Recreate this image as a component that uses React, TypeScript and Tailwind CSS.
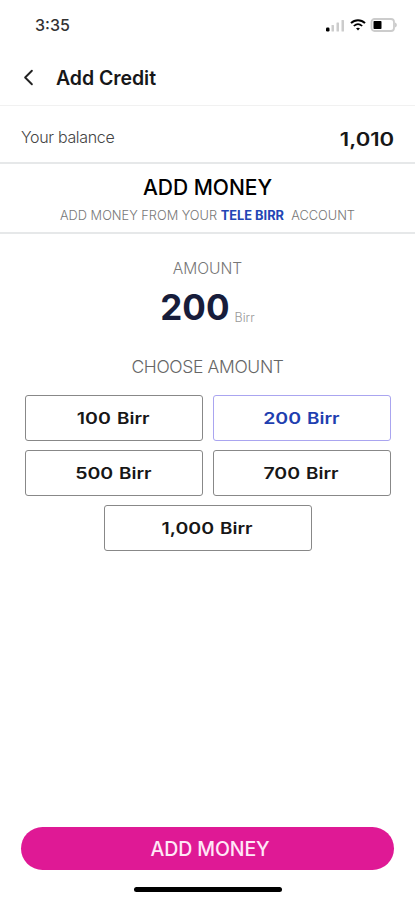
import { ChevronLeft } from "lucide-react";
import { clsx } from "clsx";
import { useState } from "react";

const AMOUNTS = [100, 200, 500, 700, 1000];

const formatAmount = (amount: number) => new Intl.NumberFormat("en-US").format(amount);

const StatusBar = () => (
  <div className="flex h-[50px] items-center justify-between pr-[17px] pl-[35px]">
    <span className="text-[16px] leading-5 font-medium text-[#333]">3:35</span>
    <div className="flex items-center gap-[4px]">
      <svg width="20" height="14" viewBox="0 0 20 14">
        <rect x="0" y="9.5" width="3.5" height="4" rx="1.2" fill="#000" />
        <rect x="5.5" y="7" width="2.5" height="6.5" rx=".5" fill="#ccc" />
        <rect x="10.5" y="4.5" width="2.5" height="9" rx=".5" fill="#ccc" />
        <rect x="15.5" y="2" width="2.5" height="11.5" rx=".5" fill="#ccc" />
      </svg>
      <svg width="16" height="12" viewBox="0 0 16 12" fill="none" stroke="#000">
        <path d="M1 4.1C5 .2 11 .2 15 4.1" strokeWidth="2" />
        <path d="M3.8 7C6.4 4.6 9.6 4.6 12.2 7" strokeWidth="1.7" />
        <path d="M6 9.3C7.2 8.4 8.8 8.4 10 9.3L8 11.6Z" fill="#000" stroke="none" />
      </svg>
      <svg width="28" height="14" viewBox="0 0 28 14">
        <rect x="1.5" y="1" width="22.5" height="12" rx="3" fill="none" stroke="#ccc" strokeWidth="1.8" />
        <rect x="3.5" y="3" width="8" height="8" rx=".8" fill="#000" />
        <path d="M25 4.5V9.5C27.5 8.5 27.5 5.5 25 4.5Z" fill="#ccc" />
      </svg>
    </div>
  </div>
);

type AmountButtonProps = {
  amount: number;
  selected: boolean;
  onSelect: (amount: number) => void;
};

const AmountButton = ({ amount, selected, onSelect }: AmountButtonProps) => (
  <button
    type="button"
    onClick={() => onSelect(amount)}
    className={clsx(
      "flex h-[46px] items-center justify-center gap-[6px] rounded-[3px] border pb-px text-[16px] font-semibold",
      amount === 1000 ? "w-[208px] pl-1" : "w-[178px] pl-px",
      selected ? "border-[#aaa5f0] text-[#1f3fb0]" : "border-[#888] text-[#171717]",
    )}
  >
    <span className="origin-right scale-x-[1.22]">{formatAmount(amount)}</span>
    <span className="origin-left scale-x-[1.18]">Birr</span>
  </button>
);

export default function App() {
  const [selected, setSelected] = useState(200);

  return (
    <div className="flex h-[900px] w-[415px] flex-col bg-white font-['Inter',sans-serif]">
      <StatusBar />
      <header className="flex h-14 items-center border-b border-[#f1f1f1] pl-[15px]">
        <ChevronLeft size={27} strokeWidth={1.7} className="text-[#222]" />
        <h1 className="ml-[14px] pt-0.5 text-[19.5px] font-semibold tracking-[-0.05px] text-[#171719]">Add Credit</h1>
      </header>

      <section className="flex h-[58px] items-center justify-between border-b-2 border-[#e6e8e9] px-[21px] pt-1.5">
        <span className="text-[16px] font-light tracking-[-0.33px] text-[#444]">Your balance</span>
        <span className="origin-right scale-x-[1.23] pt-1 text-[18px] font-semibold text-[#171717]">1,010</span>
      </section>

      <section className="flex h-[70px] flex-col items-center border-b-2 border-[#e6e8e9] pt-2.5">
        <h2 className="text-[21px] leading-7 font-medium text-black">ADD MONEY</h2>
        <p className="mt-1.5 text-[12.8px] leading-4 font-light whitespace-pre text-[#777]">
          ADD MONEY FROM YOUR <span className="font-bold text-[#2346b5]">TELE BIRR</span>
          {"  ACCOUNT"}
        </p>
      </section>

      <section className="flex flex-col items-center pt-[25px]">
        <p className="text-[15.6px] leading-5 font-light text-[#777]">AMOUNT</p>
        <div className="mt-2 flex items-baseline gap-[5px] leading-10">
          <span className="text-[35px] font-bold text-[#171d3b]">{selected}</span>
          <span className="relative top-0.5 text-[12.5px] font-light text-[#999]">Birr</span>
        </div>
      </section>

      <section className="flex flex-col items-center pt-[19px]">
        <p className="text-[17.5px] leading-6 font-light tracking-[-0.35px] text-[#666]">CHOOSE AMOUNT</p>
        <div className="mt-4 flex flex-wrap justify-center gap-x-2.5 gap-y-[9px]">
          {AMOUNTS.map((amount) => (
            <AmountButton key={amount} amount={amount} selected={amount === selected} onSelect={setSelected} />
          ))}
        </div>
      </section>

      <footer className="mt-auto flex flex-col items-center px-[21px] pb-2">
        <button
          type="button"
          className="h-[43px] w-full rounded-full bg-[#df1995] pt-[3px] pl-[5px] text-[19.5px] font-medium tracking-[-0.1px] text-[#ffe7f7]"
        >
          ADD MONEY
        </button>
        <div className="mt-[17px] h-[5px] w-[148px] rounded-full bg-black" />
      </footer>
    </div>
  );
}
